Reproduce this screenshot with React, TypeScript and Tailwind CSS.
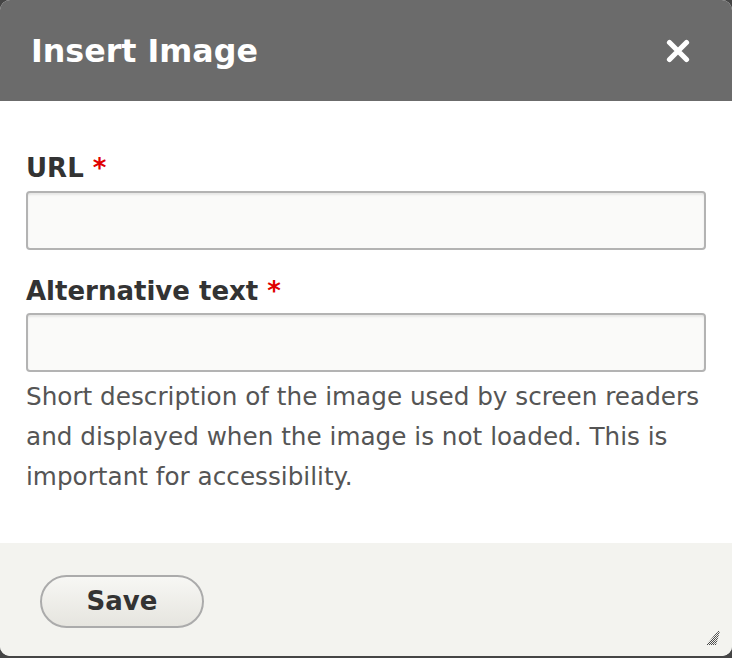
export default function App() {
  return (
    <div className="h-[658px] w-[732px] bg-[#454545] font-['DejaVu_Sans',sans-serif]">
      <div className="relative flex h-[656px] flex-col overflow-hidden rounded-[10px] bg-white">
        <header className="flex h-[101px] shrink-0 items-center justify-between bg-[#6b6b6b] pl-[31px] pr-[42px]">
          <h1 className="text-[31.7px] font-bold leading-[38px] text-white">Insert Image</h1>
          <button type="button" aria-label="Close" className="flex h-[24px] w-[24px] items-center justify-center">
            <svg width="24" height="24" viewBox="0 0 24 24">
              <path d="M3.5 3.5 L20.5 20.5 M20.5 3.5 L3.5 20.5" stroke="white" strokeWidth="5.2" strokeLinecap="round" />
            </svg>
          </button>
        </header>

        <div className="flex-1 px-[26px] pt-[52px]">
          <label className="mb-[8px] block text-[26px] font-bold leading-[30px] text-[#333]">
            URL <span className="text-[#e00000]">*</span>
          </label>
          <input
            type="text"
            className="block h-[59px] w-full rounded-[4px] border-2 border-[#b3b3b3] bg-[#fafaf9] shadow-[inset_0_2px_2px_rgba(0,0,0,0.08)] outline-none"
          />

          <label className="mb-[7px] mt-[26px] block text-[26px] font-bold leading-[30px] text-[#333]">
            Alternative text <span className="text-[#e00000]">*</span>
          </label>
          <input
            type="text"
            className="block h-[59px] w-full rounded-[4px] border-2 border-[#b3b3b3] bg-[#fafaf9] shadow-[inset_0_2px_2px_rgba(0,0,0,0.08)] outline-none"
          />
          <p className="mt-[5px] text-[24.7px] leading-[40px] text-[#555]">
            Short description of the image used by screen readers and displayed when the image is not loaded. This is
            important for accessibility.
          </p>
        </div>

        <footer className="flex h-[113px] shrink-0 items-start bg-[#f3f3ef] pl-[40px] pt-[32px]">
          <button
            type="button"
            className="h-[53px] w-[164px] rounded-full border-2 border-[#ababab] bg-gradient-to-b from-[#f7f7f4] to-[#e6e5df] text-[26px] font-bold text-[#333]"
          >
            Save
          </button>
        </footer>

        <svg className="absolute bottom-[10px] right-[11px]" width="16" height="16" viewBox="0 0 16 16">
          <defs>
            <pattern id="hatch" width="2" height="2" patternUnits="userSpaceOnUse">
              <rect width="1" height="1" fill="#4a4a4a" />
              <rect x="1" y="1" width="1" height="1" fill="#4a4a4a" />
            </pattern>
          </defs>
          <path d="M13 1 L9 15 L1 15 Z" fill="url(#hatch)" />
          <path d="M13 1 L15 1 L11 15 L9 15 Z" fill="url(#hatch)" />
        </svg>
      </div>
    </div>
  );
}
